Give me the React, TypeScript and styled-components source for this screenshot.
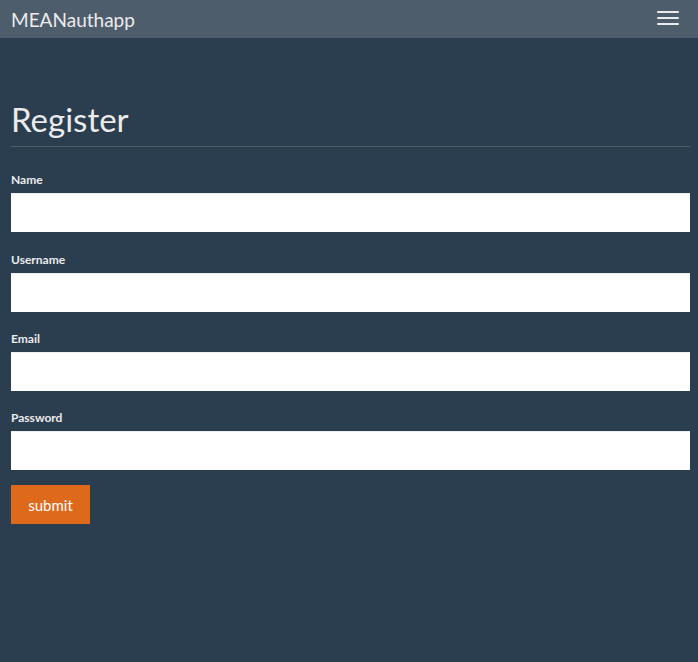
import React from "react";
import styled, { createGlobalStyle } from "styled-components";

const Global = createGlobalStyle`
  html, body { margin: 0; padding: 0; background: #2b3e50; }
  body { font-family: Lato, "Open Sans", sans-serif; color: #ebebeb; min-height: 662px; }
`;

const Navbar = styled.nav`
  height: 38px;
  background: #4e5d6c;
  display: flex;
  align-items: center;
  justify-content: space-between;
  padding: 0 19px 0 11px;
`;

const Brand = styled.a`
  font-size: 19px;
  color: #ebebeb;
  text-decoration: none;
  line-height: 1;
`;

const Toggler = styled.button`
  background: none;
  border: none;
  padding: 0 0 2px;
  width: 22px;
  display: flex;
  flex-direction: column;
  gap: 4px;
  cursor: pointer;
`;

const Bar = styled.span`
  display: block;
  height: 2px;
  background: #ebebeb;
  border-radius: 1px;
`;

const Container = styled.main`
  padding: 0 8px 0 11px;
`;

const Title = styled.h2`
  margin: 0;
  padding: 63px 0 9px;
  font-size: 33px;
  font-weight: 400;
  line-height: 1.1;
  color: #ebebeb;
  border-bottom: 1px solid #4e5d6c;
`;

const Form = styled.form`
  display: flex;
  flex-direction: column;
  padding-top: 26px;
`;

const Group = styled.div<{ $last?: boolean }>`
  display: flex;
  flex-direction: column;
  gap: 6px;
  margin-bottom: ${(p) => (p.$last ? "15px" : "20.4px")};
`;

const Label = styled.label`
  font-size: 12px;
  font-weight: 700;
  line-height: 14px;
  color: #ebebeb;
`;

const Input = styled.input`
  height: 39px;
  box-sizing: border-box;
  border: none;
  border-top: 1px solid #f0f0f0;
  background: #fff;
  font-family: inherit;
  font-size: 15px;
  padding: 6px 12px;
  outline: none;
`;

const Submit = styled.button`
  align-self: flex-start;
  width: 79px;
  height: 39px;
  border: none;
  background: #df691a;
  color: #fff;
  font-family: inherit;
  font-size: 15px;
  cursor: pointer;
`;

export default function App() {
  return (
    <>
      <Global />
      <Navbar>
        <Brand href="#">MEANauthapp</Brand>
        <Toggler aria-label="menu">
          <Bar />
          <Bar />
          <Bar />
        </Toggler>
      </Navbar>
      <Container>
        <Title>Register</Title>
        <Form onSubmit={(e) => e.preventDefault()}>
          <Group>
            <Label>Name</Label>
            <Input type="text" />
          </Group>
          <Group>
            <Label>Username</Label>
            <Input type="text" />
          </Group>
          <Group>
            <Label>Email</Label>
            <Input type="text" />
          </Group>
          <Group $last>
            <Label>Password</Label>
            <Input type="password" />
          </Group>
          <Submit type="submit">submit</Submit>
        </Form>
      </Container>
    </>
  );
}
